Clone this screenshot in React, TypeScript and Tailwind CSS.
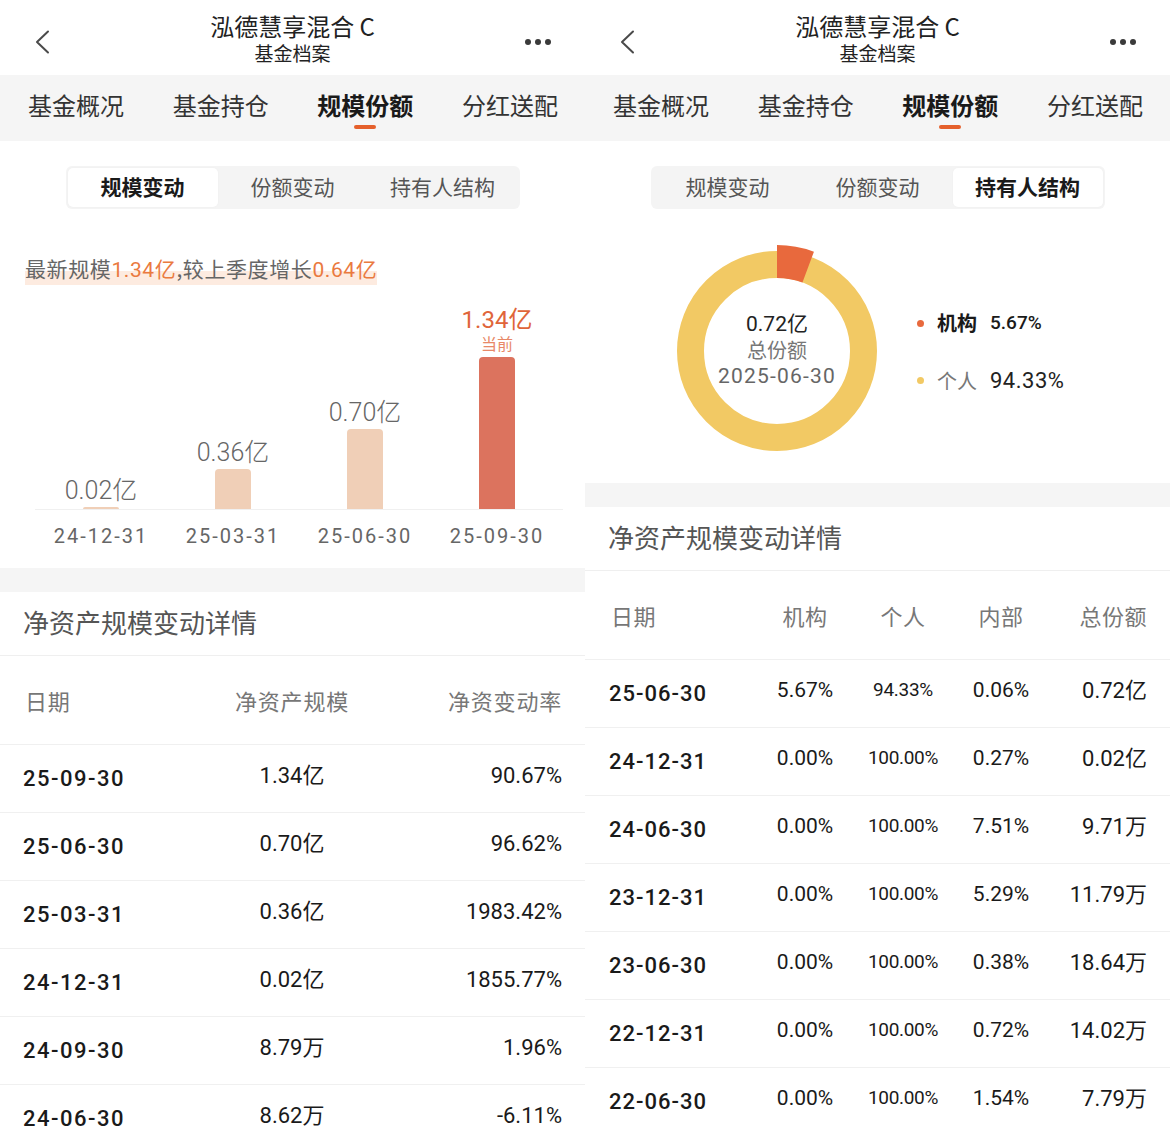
import React from 'react'

const FONT = "font-['Noto_Sans_CJK_SC','Noto_Sans',sans-serif]"
const NUM = "font-['Roboto','Noto_Sans_CJK_SC',sans-serif]"

const tabs = ['基金概况', '基金持仓', '规模份额', '分红送配']
const segments = ['规模变动', '份额变动', '持有人结构']

const scaleRows = [
  ['25-09-30', '1.34亿', '90.67%'],
  ['25-06-30', '0.70亿', '96.62%'],
  ['25-03-31', '0.36亿', '1983.42%'],
  ['24-12-31', '0.02亿', '1855.77%'],
  ['24-09-30', '8.79万', '1.96%'],
  ['24-06-30', '8.62万', '-6.11%'],
]

const holderRows = [
  ['25-06-30', '5.67%', '94.33%', '0.06%', '0.72亿'],
  ['24-12-31', '0.00%', '100.00%', '0.27%', '0.02亿'],
  ['24-06-30', '0.00%', '100.00%', '7.51%', '9.71万'],
  ['23-12-31', '0.00%', '100.00%', '5.29%', '11.79万'],
  ['23-06-30', '0.00%', '100.00%', '0.38%', '18.64万'],
  ['22-12-31', '0.00%', '100.00%', '0.72%', '14.02万'],
  ['22-06-30', '0.00%', '100.00%', '1.54%', '7.79万'],
]

const bars = [
  { date: '24-12-31', label: '0.02亿', h: 2, current: false },
  { date: '25-03-31', label: '0.36亿', h: 40, current: false },
  { date: '25-06-30', label: '0.70亿', h: 80, current: false },
  { date: '25-09-30', label: '1.34亿', h: 152, current: true },
]

// 顶部导航 + 一级tab
function NavHeader() {
  return (
    <>
      <div className="flex h-[75px] bg-white">
        <div className="w-[90px] pl-[34px] pt-[29px]">
          <svg width="18" height="26" viewBox="0 0 18 26">
            <polyline
              points="14,2.5 3,13 14,23.5"
              fill="none"
              stroke="#4a4a4a"
              strokeWidth="2"
              strokeLinecap="round"
              strokeLinejoin="round"
            />
          </svg>
        </div>
        <div className="flex flex-1 flex-col items-center pt-[12px]">
          <div className="text-[24px] leading-[28px] text-[#222]">泓德慧享混合 C</div>
          <div className="text-[19px] leading-[26px] text-[#222]">基金档案</div>
        </div>
        <div className="flex w-[90px] justify-end gap-[4px] pr-[34px] pt-[39px]">
          <span className="h-[6px] w-[6px] rounded-full bg-[#3a3a3a]" />
          <span className="h-[6px] w-[6px] rounded-full bg-[#3a3a3a]" />
          <span className="h-[6px] w-[6px] rounded-full bg-[#3a3a3a]" />
        </div>
      </div>
      <div className="flex h-[66px] justify-between bg-[#f5f5f5] pl-[28px] pr-[27px]">
        {tabs.map((t, i) => (
          <div key={t} className="flex flex-col items-center pt-[14px]">
            <span
              className={
                i === 2
                  ? 'text-[24px] leading-[32px] font-bold text-[#1a1a1a]'
                  : 'text-[24px] leading-[32px] text-[#333]'
              }
            >
              {t}
            </span>
            {i === 2 && <span className="mt-[4px] h-[4px] w-[22px] rounded-full bg-[#e5602c]" />}
          </div>
        ))}
      </div>
    </>
  )
}

function Segmented({ active }: { active: number }) {
  return (
    <div className="mx-auto flex h-[43px] w-[454px] rounded-[6px] bg-[#f4f4f4] p-[2px]">
      {segments.map((s, i) => (
        <div
          key={s}
          className={
            i === active
              ? 'flex w-[150px] items-center justify-center rounded-[5px] bg-white pb-[2px] text-[21px] font-bold text-[#1a1a1a] shadow-[0_0_2px_rgba(0,0,0,0.04)]'
              : 'flex w-[150px] items-center justify-center pb-[2px] text-[21px] text-[#555]'
          }
        >
          {s}
        </div>
      ))}
    </div>
  )
}

function SectionTitle() {
  return (
    <div className="flex h-[64px] items-center border-b border-[#efefef] pb-[4px] pl-[23px] text-[26px] text-[#555]">
      净资产规模变动详情
    </div>
  )
}

function ScalePanel() {
  return (
    <div className="w-[585px] shrink-0 bg-white">
      <NavHeader />
      <div className="h-[427px] pt-[25px]">
        <Segmented active={0} />
        <div className="mt-[45px] pl-[25px] text-[21px] leading-[28px] tracking-[0.6px] text-[#666]">
          <span className="bg-[linear-gradient(transparent_55%,#fdebe0_55%)] pb-[2px]">
            最新规模<span className={`${NUM} text-[#ea7a3f]`}>1.34</span>
            <span className="text-[#ea7a3f]">亿</span>,较上季度增长
            <span className={`${NUM} text-[#ea7a3f]`}>0.64</span>
            <span className="text-[#ea7a3f]">亿</span>
          </span>
        </div>
        {/* 柱状图 */}
        <div className="ml-[35px] mr-[22px] mt-[20px] flex h-[206px] items-end border-b border-[#f0f0f0]">
          {bars.map((b) => (
            <div key={b.date} className="flex w-[132px] flex-col items-center">
              {b.current ? (
                <>
                  <span className={`${NUM} text-[24px] leading-[26px] text-[#e0653a]`}>1.34亿</span>
                  <span className="mb-[4px] text-[16px] leading-[20px] text-[#e88867]">当前</span>
                </>
              ) : (
                <span className={`${NUM} mb-[3px] text-[25px] leading-[26px] font-light text-[#666]`}>
                  {b.label}
                </span>
              )}
              <div
                className={
                  b.current
                    ? 'w-[36px] rounded-t-[4px] bg-[#dc735e]'
                    : 'w-[36px] rounded-t-[4px] bg-[#f0cfb7]'
                }
                style={{ height: b.h }}
              />
            </div>
          ))}
        </div>
        <div className="ml-[35px] mr-[22px] mt-[13px] flex">
          {bars.map((b) => (
            <div
              key={b.date}
              className={`${NUM} w-[132px] text-center text-[20px] leading-[26px] tracking-[2px] text-[#666]`}
            >
              {b.date}
            </div>
          ))}
        </div>
      </div>
      <div className="h-[24px] bg-[#f5f5f5]" />
      <SectionTitle />
      <div className="grid h-[88px] grid-cols-[169px_200px_1fr] items-center px-[23px] text-[22px] tracking-[0.8px] text-[#777]">
        <span className="pl-[2px]">日期</span>
        <span className="text-center">净资产规模</span>
        <span className="text-right">净资变动率</span>
      </div>
      {scaleRows.map((r) => (
        <div
          key={r[0]}
          className={`${NUM} grid h-[68px] grid-cols-[169px_200px_1fr] items-center border-t border-[#f0f0f0] px-[23px] text-[#1a1a1a]`}
        >
          <span className="text-[22px] font-medium tracking-[1.5px]">{r[0]}</span>
          <span className="mb-[6px] text-center text-[22px]">{r[1]}</span>
          <span className="mb-[6px] text-right text-[22px]">{r[2]}</span>
        </div>
      ))}
    </div>
  )
}

// 圆环图的扇形
function sector(cx: number, cy: number, rIn: number, rOut: number, a0: number, a1: number) {
  const p = (r: number, a: number) => {
    const rad = (a * Math.PI) / 180
    return `${cx + r * Math.sin(rad)},${cy - r * Math.cos(rad)}`
  }
  return `M${p(rOut, a0)} A${rOut},${rOut} 0 0 1 ${p(rOut, a1)} L${p(rIn, a1)} A${rIn},${rIn} 0 0 0 ${p(rIn, a0)} Z`
}

function HolderPanel() {
  return (
    <div className="w-[585px] shrink-0 bg-white">
      <NavHeader />
      <div className="h-[342px] pt-[25px]">
        <Segmented active={2} />
        <div className="mt-[27px] flex items-center pl-[77px]">
          <div className="relative h-[230px] w-[230px]">
            <svg width="230" height="230" viewBox="0 0 230 230">
              <circle cx="115" cy="115" r="86.5" fill="none" stroke="#f2c964" strokeWidth="27" />
              <path d={sector(115, 115, 73, 106, 0, 20.4)} fill="#e8693d" />
            </svg>
            <div className="absolute inset-0 flex flex-col items-center justify-center pb-[3px]">
              <span className={`${NUM} text-[21px] leading-[25px] text-[#222]`}>
                0.72<span className={FONT}>亿</span>
              </span>
              <span className="text-[20px] leading-[26px] text-[#777]">总份额</span>
              <span className={`${NUM} text-[21px] leading-[26px] tracking-[1.2px] text-[#666]`}>2025-06-30</span>
            </div>
          </div>
          <div className="ml-[25px] flex flex-col gap-[27px] pt-[4px]">
            <div className="flex items-center">
              <span className="h-[7px] w-[7px] rounded-full bg-[#e8693d]" />
              <span className="ml-[13px] text-[20px] leading-[28px] font-bold text-[#1a1a1a]">机构</span>
              <span className={`${NUM} ml-[13px] text-[19px] font-medium text-[#1a1a1a]`}>5.67%</span>
            </div>
            <div className="flex items-center">
              <span className="h-[7px] w-[7px] rounded-full bg-[#f2c964]" />
              <span className="ml-[13px] text-[20px] leading-[28px] text-[#777]">个人</span>
              <span className={`${NUM} ml-[13px] text-[22px] tracking-[0.5px] text-[#222]`}>94.33%</span>
            </div>
          </div>
        </div>
      </div>
      <div className="h-[24px] bg-[#f5f5f5]" />
      <SectionTitle />
      <div className="grid h-[88px] grid-cols-[147px_98px_98px_98px_1fr] items-center pl-[24px] pr-[23px] text-[22px] tracking-[0.5px] text-[#777]">
        <span className="pl-[2px]">日期</span>
        <span className="text-center">机构</span>
        <span className="text-center">个人</span>
        <span className="text-center">内部</span>
        <span className="text-right">总份额</span>
      </div>
      {holderRows.map((r) => (
        <div
          key={r[0]}
          className={`${NUM} grid h-[68px] grid-cols-[147px_98px_98px_98px_1fr] items-center border-t border-[#f0f0f0] pl-[24px] pr-[23px] text-[#1a1a1a]`}
        >
          <span className="text-[22px] font-medium tracking-[1px]">{r[0]}</span>
          <span className="mb-[6px] text-center text-[21px]">{r[1]}</span>
          <span className="mb-[6px] text-center text-[19px] tracking-[-0.3px]">{r[2]}</span>
          <span className="mb-[6px] text-center text-[21px]">{r[3]}</span>
          <span className="mb-[6px] text-right text-[22px]">{r[4]}</span>
        </div>
      ))}
    </div>
  )
}

export default function App() {
  return (
    <div className={`${FONT} flex h-[1139px] w-[1170px] overflow-hidden bg-white`}>
      <ScalePanel />
      <HolderPanel />
    </div>
  )
}
